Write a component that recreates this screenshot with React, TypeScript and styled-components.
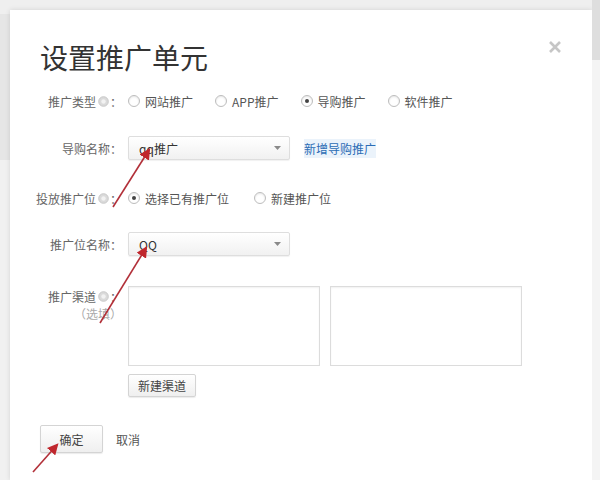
import styled, { createGlobalStyle } from 'styled-components';

const GlobalStyle = createGlobalStyle`
  html, body {
    margin: 0;
    padding: 0;
  }

  body {
    font-family: "Noto Sans CJK SC", "Noto Sans", sans-serif;
    background: #efefef;
  }
`;

const Page = styled.div`
  position: relative;

  display: flex;

  width: 600px;
  height: 480px;
  overflow: hidden;

  background: #efefef;
`;

const Gutter = styled.div`
  flex: 0 0 10px;

  background: linear-gradient(to bottom, #efefef 0 14px, #e6e6e6 14px 160px, #f1f1f1 160px);
`;

const Modal = styled.div`
  flex: 0 0 582px;

  box-sizing: border-box;
  margin-top: 10px;
  padding: 30px 30px 0;

  background: #fff;
  box-shadow: 0 0 5px rgba(0, 0, 0, 0.12);
`;

const Scrollbar = styled.div`
  display: flex;
  flex: 0 0 8px;
  flex-direction: column;
`;

const Thumb = styled.div`
  height: 60px;

  background: #dedede;
`;

const Track = styled.div`
  flex: 1;

  background: #f4f4f4;
`;

const Header = styled.div`
  display: flex;
  align-items: flex-start;
  justify-content: space-between;
`;

const Title = styled.h1`
  margin: 0;

  font-size: 28px;
  font-weight: 400;
  line-height: 34px;
  color: #333;
`;

const Close = styled.button`
  display: flex;

  margin: 0;
  padding: 0;

  color: #c6c6c6;

  background: none;
  border: 0;
`;

const Form = styled.div`
  margin-top: 15px;
`;

const Row = styled.div<{ $top?: number; $start?: boolean }>`
  display: grid;
  grid-template-columns: 82px 1fr;
  align-items: ${(p) => (p.$start ? 'start' : 'center')};
  column-gap: 6px;

  min-height: 24px;
  margin-top: ${(p) => p.$top ?? 0}px;
`;

const Label = styled.div<{ $pad?: number }>`
  display: flex;
  flex-direction: column;
  align-items: flex-end;

  padding-top: ${(p) => p.$pad ?? 0}px;

  font-size: 12px;
  line-height: 17px;
  color: #666;
  white-space: nowrap;
`;

const LabelLine = styled.span`
  display: flex;
  align-items: center;
`;

const Optional = styled.span`
  color: #aaa;
`;

const Help = styled.svg`
  flex: 0 0 11px;

  margin: 0 1px 0 2px;
`;

const RadioGroup = styled.div<{ $gap: number }>`
  display: flex;
  align-items: center;
  gap: ${(p) => p.$gap}px;
`;

const Option = styled.label`
  display: inline-flex;
  align-items: center;
  gap: 5px;

  font-size: 12px;
  color: #555;
  white-space: nowrap;
`;

const Radio = styled.span<{ $checked?: boolean }>`
  display: inline-flex;
  align-items: center;
  justify-content: center;

  box-sizing: border-box;
  width: 12px;
  height: 12px;

  background: #fff;
  border: 1px solid #bdbdbd;
  border-radius: 50%;
  box-shadow: inset 0 1px 2px rgba(0, 0, 0, 0.1);

  &::after {
    content: '';

    width: 4px;
    height: 4px;

    background: ${(p) => (p.$checked ? '#444' : 'transparent')};
    border-radius: 50%;
  }
`;

const FieldLine = styled.div`
  display: flex;
  align-items: center;
`;

const Select = styled.div`
  display: flex;
  align-items: center;
  justify-content: space-between;

  box-sizing: border-box;
  width: 162px;
  height: 24px;
  padding: 0 8px 0 10px;

  font-size: 12px;
  color: #333;

  background: linear-gradient(#fff, #f1f1f1);
  border: 1px solid #dedede;
  border-radius: 2px;
  box-shadow: 0 1px 1px rgba(0, 0, 0, 0.06);
`;

const Link = styled.a`
  margin-left: 14px;
  padding: 1px 0;

  font-size: 12px;
  color: #2b6cb5;
  text-decoration: none;

  background: rgba(215, 231, 247, 0.5);
`;

const Channels = styled.div`
  display: flex;
  gap: 10px;
`;

const TextBox = styled.div`
  box-sizing: border-box;
  width: 192px;
  height: 80px;

  background: #fff;
  border: 1px solid #dcdcdc;
  box-shadow: inset 0 1px 2px rgba(0, 0, 0, 0.06);
`;

const Button = styled.button<{ $w: number; $h: number }>`
  box-sizing: border-box;
  width: ${(p) => p.$w}px;
  height: ${(p) => p.$h}px;
  padding: 0;

  font-family: inherit;
  font-size: 12px;
  color: #444;

  background: linear-gradient(#fff, #efefef);
  border: 1px solid #d4d4d4;
  border-radius: 2px;
  box-shadow: 0 1px 1px rgba(0, 0, 0, 0.08);
`;

const ChannelButton = styled(Button)`
  margin-top: 8px;
`;

const Footer = styled.div`
  display: flex;
  align-items: center;
  gap: 13px;

  margin-top: 28px;
`;

const Cancel = styled.span`
  font-size: 12px;
  color: #555;
`;

const Annotations = styled.svg`
  pointer-events: none;

  position: absolute;
  top: 0;
  left: 0;
`;

const HelpIcon = () => (
  <Help width='11' height='11' viewBox='0 0 10 10'>
    <circle cx='5' cy='5' r='4.4' fill='#dadada' stroke='#c6c6c6' strokeWidth='0.8' />
    <circle cx='5' cy='5' r='2' fill='#f2f2f2' />
  </Help>
);

const Caret = () => (
  <svg width='7' height='4' viewBox='0 0 7 4'>
    <path d='M0 0h7L3.5 4z' fill='#8a8a8a' />
  </svg>
);

const arrows = [
  [113, 207, 149, 150],
  [100, 323, 146, 248],
  [33, 472, 57, 445],
];

const App = () => (
  <>
    <GlobalStyle />
    <Page>
      <Gutter />
      <Modal>
        <Header>
          <Title>设置推广单元</Title>
          <Close aria-label='关闭'>
            <svg width='14' height='14' viewBox='0 0 14 14'>
              <path d='M2 2l10 10M12 2L2 12' stroke='currentColor' strokeWidth='2.6' />
            </svg>
          </Close>
        </Header>

        <Form>
          <Row>
            <Label>
              <LabelLine>
                推广类型
                <HelpIcon />
                ：
              </LabelLine>
            </Label>
            <RadioGroup $gap={22}>
              <Option>
                <Radio />
                网站推广
              </Option>
              <Option>
                <Radio />
                APP推广
              </Option>
              <Option>
                <Radio $checked />
                导购推广
              </Option>
              <Option>
                <Radio />
                软件推广
              </Option>
            </RadioGroup>
          </Row>

          <Row $top={23}>
            <Label>导购名称：</Label>
            <FieldLine>
              <Select>
                qq推广
                <Caret />
              </Select>
              <Link>新增导购推广</Link>
            </FieldLine>
          </Row>

          <Row $top={26}>
            <Label>
              <LabelLine>
                投放推广位
                <HelpIcon />
                ：
              </LabelLine>
            </Label>
            <RadioGroup $gap={25}>
              <Option>
                <Radio $checked />
                选择已有推广位
              </Option>
              <Option>
                <Radio />
                新建推广位
              </Option>
            </RadioGroup>
          </Row>

          <Row $top={22}>
            <Label>推广位名称：</Label>
            <FieldLine>
              <Select>
                QQ
                <Caret />
              </Select>
            </FieldLine>
          </Row>

          <Row $top={30} $start>
            <Label $pad={2}>
              <LabelLine>
                推广渠道
                <HelpIcon />
                ：
              </LabelLine>
              <Optional>（选填）</Optional>
            </Label>
            <div>
              <Channels>
                <TextBox />
                <TextBox />
              </Channels>
              <ChannelButton $w={68} $h={23}>
                新建渠道
              </ChannelButton>
            </div>
          </Row>
        </Form>

        <Footer>
          <Button $w={63} $h={28}>
            确定
          </Button>
          <Cancel>取消</Cancel>
        </Footer>
      </Modal>
      <Scrollbar>
        <Thumb />
        <Track />
      </Scrollbar>

      <Annotations width='600' height='480' viewBox='0 0 600 480'>
        <defs>
          <marker id='head' viewBox='0 0 10 10' refX='8' refY='5' markerWidth='7' markerHeight='7' orient='auto'>
            <path d='M0 0L10 5L0 10z' fill='#c0272d' />
          </marker>
        </defs>
        {arrows.map(([x1, y1, x2, y2]) => (
          <line
            key={`${x1}-${y1}`}
            x1={x1}
            y1={y1}
            x2={x2}
            y2={y2}
            stroke='#b23039'
            strokeWidth='1.6'
            markerEnd='url(#head)'
          />
        ))}
      </Annotations>
    </Page>
  </>
);

export default App;
